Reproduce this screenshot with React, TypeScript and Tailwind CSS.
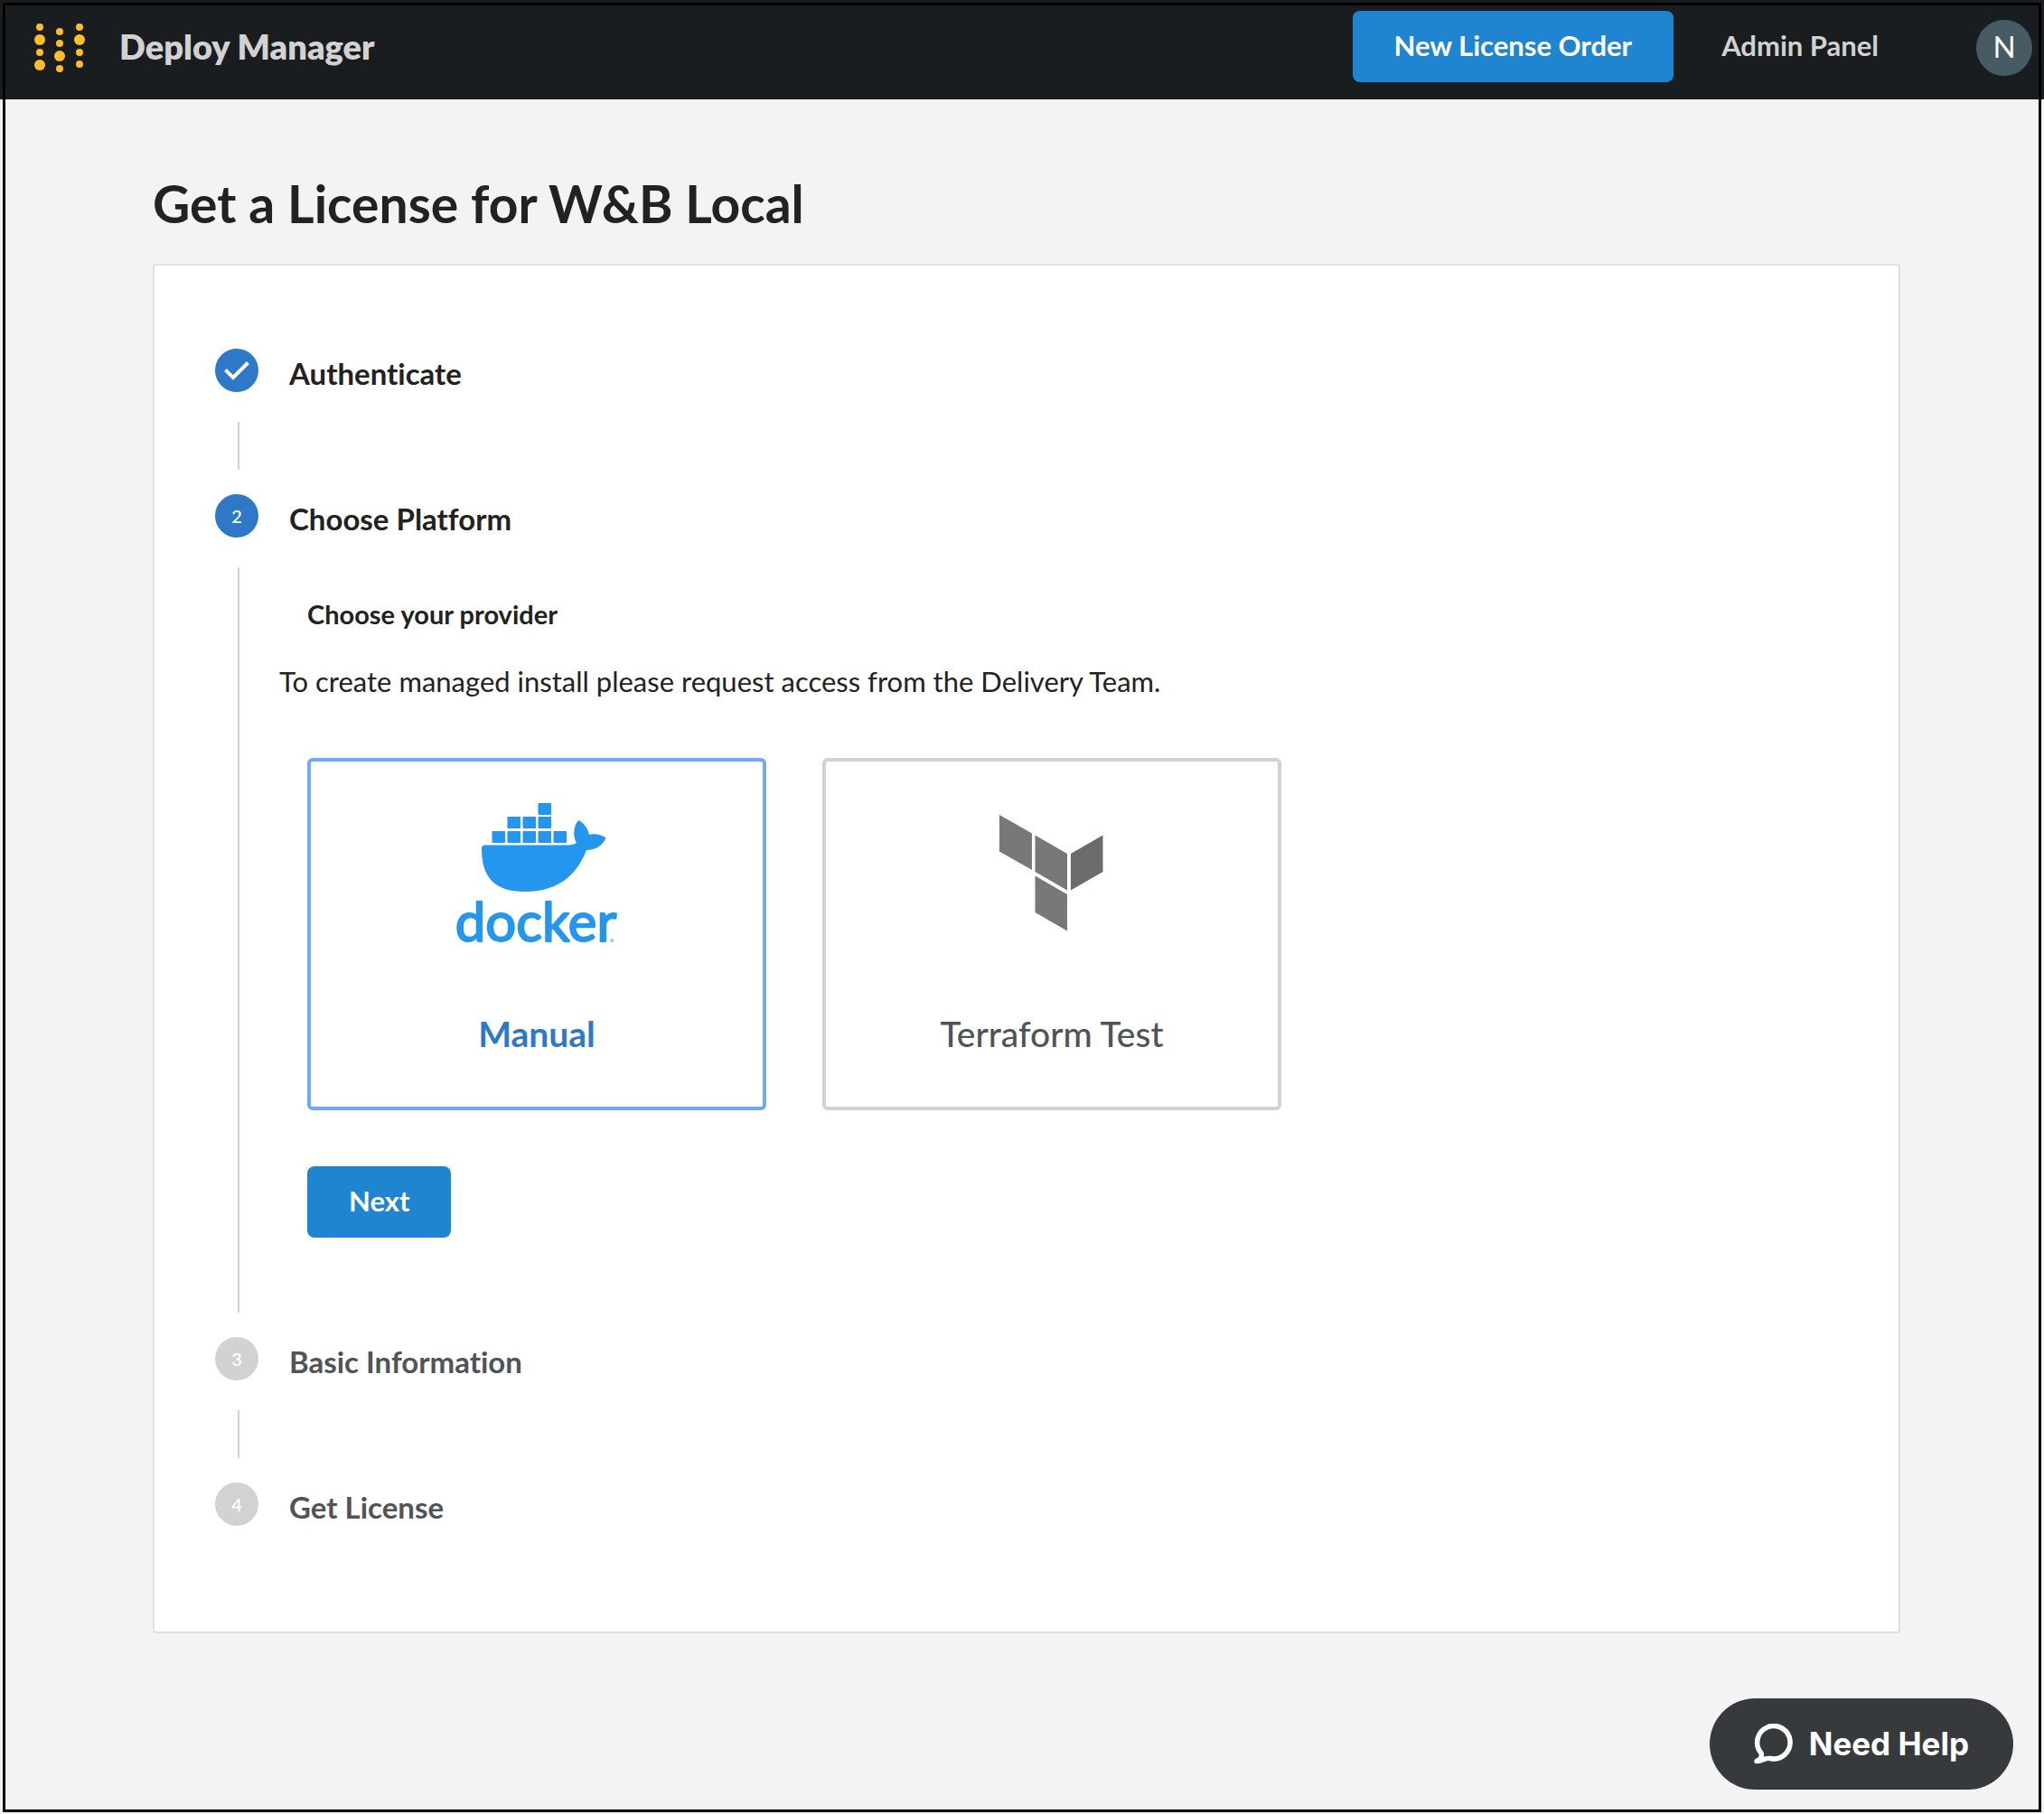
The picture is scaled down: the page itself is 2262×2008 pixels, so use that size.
import React, { useState } from "react";

type StepState = "done" | "active" | "pending";

function WandbLogo() {
  const dots: [number, number, number][] = [
    [6, 4, 4], [6, 18, 6], [6, 32, 4], [6, 46, 6],
    [28, 9, 4], [28, 22, 4], [28, 36, 6], [28, 50, 4],
    [50, 4, 4], [50, 18, 6], [50, 32, 4], [50, 45, 4],
  ];
  return (
    <svg className="h-[54px] w-[56px]" viewBox="0 0 56 54" fill="#fbbf2d" aria-hidden="true">
      {dots.map(([x, y, r], i) => (
        <circle key={i} cx={x} cy={y} r={r} />
      ))}
    </svg>
  );
}

function DockerLogo() {
  const boxes: [number, number][] = [
    [135, 29], [101, 44], [118, 44], [135, 44],
    [84, 60], [101, 60], [118, 60], [135, 60], [152, 60],
  ];
  return (
    <svg className="h-[220px] w-[260px]" viewBox="4 0 260 220" fill="#2496ed" role="img" aria-label="docker">
      {boxes.map(([x, y], i) => (
        <rect key={i} x={x + 0.5} y={y} width="14.5" height="13" rx="0.7" />
      ))}
      <path d="M77 75.5H169C173 75.5 176 74.5 178 73C174 67 174 54 180.500 48C187 52 191 58 192 64C198 62 206 64 210.500 67.500C207 76 199 81 189 81C180 104 162 127 121 127C88 127 73 112 73 79.500Q73 75.500 77 75.500Z" />
      <text
        x="133"
        y="182"
        textAnchor="middle"
        fontFamily="Lato, sans-serif"
        fontSize="60"
        fontWeight="400"
        stroke="#2496ed"
        strokeWidth="2"
        strokeLinejoin="round"
      >
        docker
      </text>
      <circle cx="217" cy="181" r="2" opacity="0.5" />
    </svg>
  );
}

function TerraformLogo() {
  return (
    <svg className="h-[220px] w-[260px]" viewBox="-6 0 260 220" fill="#787878" role="img" aria-label="Terraform">
      <path d="M66 42L102 62.500V103L66 82.500Z" />
      <path d="M105.500 64.500L141 85V125.500L105.500 105Z" />
      <path d="M105.500 109.500L141 130V170.500L105.500 150Z" />
      <path d="M145 85L180.500 64.500V105L145 125.500Z" fill="#6b6b6b" />
    </svg>
  );
}

function Step({
  number,
  title,
  state,
  last = false,
  children,
}: {
  number: number;
  title: string;
  state: StepState;
  last?: boolean;
  children?: React.ReactNode;
}) {
  const pending = state === "pending";
  return (
    <li>
      <div className="flex h-12 items-center gap-[34px]">
        <span
          className={`flex size-12 items-center justify-center rounded-full text-xl font-medium text-white ${pending ? "bg-[#d2d2d2]" : "bg-[#2e78c8]"}`}
        >
          {state === "done" ? (
            <svg className="size-8" viewBox="0 0 32 32" fill="none" stroke="#fff" strokeWidth="4" aria-label="Done">
              <path d="M3.500 15.500L12 24L28.500 7.500" />
            </svg>
          ) : (
            number
          )}
        </span>
        <h2 className={`pt-1.5 text-[33px] leading-10 font-bold ${pending ? "text-[#505457]" : "text-[#222]"}`}>{title}</h2>
      </div>
      {!last && (
        <div className="mt-[33px] mb-[27px] ml-[25px] min-h-[53px] border-l-2 border-[#d2d2d2]">{children}</div>
      )}
    </li>
  );
}

const platforms = [
  { id: "manual", label: "Manual", logo: <DockerLogo /> },
  { id: "terraform", label: "Terraform Test", logo: <TerraformLogo /> },
];

export default function App() {
  const [platform, setPlatform] = useState("manual");

  return (
    <div className="relative flex min-h-screen flex-col bg-[#f3f3f3] font-['Lato',sans-serif] text-[#222] [font-variant-ligatures:none]">
      <header className="flex h-[110px] items-center justify-between bg-[#1a1d1f] pr-[13px] pb-1 pl-[38px]">
        <div className="flex items-center gap-[38px]">
          <WandbLogo />
          <span className="mb-1 text-[38px] leading-[50px] font-extrabold text-[#d2d2d2]">Deploy Manager</span>
        </div>
        <nav className="flex items-center">
          <button className="mr-[53px] mb-1 h-[79px] rounded-lg bg-[#2085d1] px-[46px] pb-0.5 text-[31px] font-bold text-white">
            New License Order
          </button>
          <a href="#admin" className="mr-[108px] mb-1 pb-0.5 text-[31px] font-bold text-[#d2d2d2]">
            Admin Panel
          </a>
          <button
            aria-label="Account"
            className="flex size-[62px] items-center justify-center rounded-full bg-[#475b65] pb-0.5 text-[33px] text-white"
          >
            N
          </button>
        </nav>
      </header>

      <main className="mr-[159px] ml-[169px] pt-[72px] pb-[200px]">
        <h1 className="mb-6 text-[57px] leading-[86px] font-bold">Get a License for W&amp;B Local</h1>
        <section className="rounded border-2 border-[#e0e0e0] bg-white px-[67px] pt-[92px] pb-[117px]">
          <ol>
            <Step number={1} title="Authenticate" state="done" />
            <Step number={2} title="Choose Platform" state="active">
              <div className="pt-[30px] pb-[83px] pl-[75px]">
                <h3 className="text-[29px] leading-[44px] font-bold">Choose your provider</h3>
                <p className="mt-[30px] -ml-[31px] text-[31px] leading-[44px]">
                  To create managed install please request access from the Delivery Team.
                </p>
                <div className="mt-[63px] flex gap-[62px]">
                  {platforms.map(({ id, label, logo }) => {
                    const selected = id === platform;
                    return (
                      <button
                        key={id}
                        aria-pressed={selected}
                        onClick={() => setPlatform(id)}
                        className={`flex h-[390px] w-[508px] flex-col items-center rounded-md border-4 pt-[17px] ${
                          selected
                            ? "border-[#6ea8ff] font-bold text-[#2e78c8]"
                            : "border-[#d2d2d2] font-medium text-[#505457]"
                        }`}
                      >
                        {logo}
                        <span className="mt-10 text-[39px] leading-[48px]">{label}</span>
                      </button>
                    );
                  })}
                </div>
                <button className="mt-[62px] h-[79px] rounded-lg bg-[#2085d1] px-[46px] pb-0.5 text-[31px] font-bold text-white">
                  Next
                </button>
              </div>
            </Step>
            <Step number={3} title="Basic Information" state="pending" />
            <Step number={4} title="Get License" state="pending" last />
          </ol>
        </section>
      </main>

      <button className="absolute right-[34px] bottom-[27px] flex h-[101px] items-center gap-[18px] rounded-full bg-[#373a3c] pr-[49px] pl-[48px] font-['Inter',sans-serif] text-[35px] font-bold text-white">
        <svg className="h-[46px] w-[44px]" viewBox="0 0 44 46" fill="none" stroke="#fff" strokeWidth="5.500" strokeLinejoin="round" aria-hidden="true">
          <path d="M4 41.500C8 39.500 10.500 37.500 9 32.500A18.200 18.200 0 1 1 19 38.500C14 37.500 11 41 4 41.500Z" />
        </svg>
        Need Help
      </button>

      <div className="pointer-events-none absolute inset-x-[3px] top-[3px] bottom-0.5 border-[3px] border-black" />
    </div>
  );
}
